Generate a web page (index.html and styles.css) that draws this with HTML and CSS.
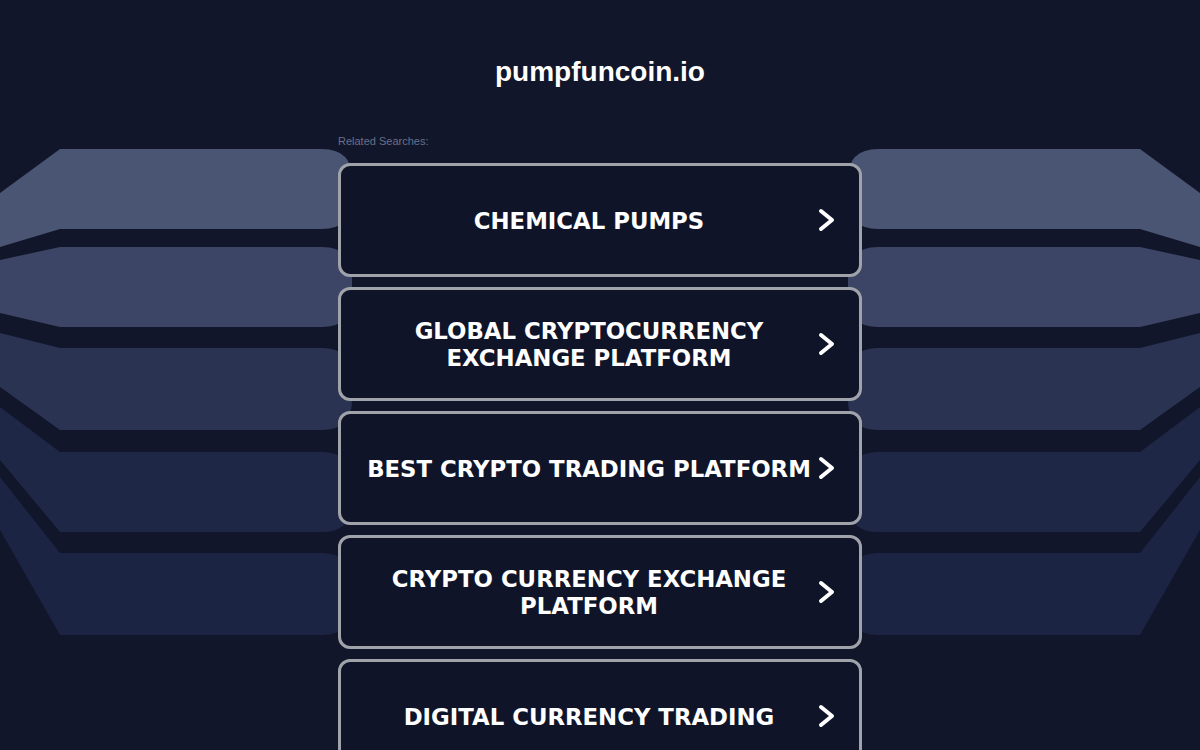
FILE: index.html
```html
<!DOCTYPE html>
<html lang="en">
<head>
    <meta charset="UTF-8">
    <meta name="viewport" content="width=device-width, initial-scale=1.0">
    <title>pumpfuncoin.io</title>
    <link rel="stylesheet" href="styles.css">
</head>
<body>
    <div class="backdrop">
        <svg width="1200" height="750" viewBox="0 0 1200 750" xmlns="http://www.w3.org/2000/svg">
            <g>
                <path fill="#4a5473" d="M0,193 L60,149 H322 Q352,149 352,179 V199 Q352,229 322,229 H60 L0,247 Z"/>
                <path fill="#3c4565" d="M0,260 L60,247 H322 Q352,247 352,277 V297 Q352,327 322,327 H60 L0,313 Z"/>
                <path fill="#2b3353" d="M0,333 L60,348 H322 Q352,348 352,378 V400 Q352,430 322,430 H60 L0,387 Z"/>
                <path fill="#1f2747" d="M0,407 L60,452 H322 Q352,452 352,482 V502 Q352,532 322,532 H60 L0,460 Z"/>
                <path fill="#1c2444" d="M0,477 L60,553 H322 Q352,553 352,583 V605 Q352,635 322,635 H60 L0,530 Z"/>
            </g>
            <g transform="translate(1200,0) scale(-1,1)">
                <path fill="#4a5473" d="M0,193 L60,149 H322 Q352,149 352,179 V199 Q352,229 322,229 H60 L0,247 Z"/>
                <path fill="#3c4565" d="M0,260 L60,247 H322 Q352,247 352,277 V297 Q352,327 322,327 H60 L0,313 Z"/>
                <path fill="#2b3353" d="M0,333 L60,348 H322 Q352,348 352,378 V400 Q352,430 322,430 H60 L0,387 Z"/>
                <path fill="#1f2747" d="M0,407 L60,452 H322 Q352,452 352,482 V502 Q352,532 322,532 H60 L0,460 Z"/>
                <path fill="#1c2444" d="M0,477 L60,553 H322 Q352,553 352,583 V605 Q352,635 322,635 H60 L0,530 Z"/>
            </g>
        </svg>
    </div>

    <div class="page">
        <h1 class="domain">pumpfuncoin.io</h1>
        <div class="related">
            <p class="related-title">Related Searches:</p>
            <a class="search-link" href="#">
                <span class="link-text">CHEMICAL PUMPS</span>
                <svg class="chevron" width="24" height="28" viewBox="0 0 24 28"><path d="M6,5 L17,14 L6,23"/></svg>
            </a>
            <a class="search-link" href="#">
                <span class="link-text">GLOBAL CRYPTOCURRENCY EXCHANGE PLATFORM</span>
                <svg class="chevron" width="24" height="28" viewBox="0 0 24 28"><path d="M6,5 L17,14 L6,23"/></svg>
            </a>
            <a class="search-link" href="#">
                <span class="link-text">BEST CRYPTO TRADING PLATFORM</span>
                <svg class="chevron" width="24" height="28" viewBox="0 0 24 28"><path d="M6,5 L17,14 L6,23"/></svg>
            </a>
            <a class="search-link" href="#">
                <span class="link-text">CRYPTO CURRENCY EXCHANGE PLATFORM</span>
                <svg class="chevron" width="24" height="28" viewBox="0 0 24 28"><path d="M6,5 L17,14 L6,23"/></svg>
            </a>
            <a class="search-link" href="#">
                <span class="link-text">DIGITAL CURRENCY TRADING</span>
                <svg class="chevron" width="24" height="28" viewBox="0 0 24 28"><path d="M6,5 L17,14 L6,23"/></svg>
            </a>
        </div>
    </div>
</body>
</html>
```

FILE: styles.css
```css
body {
    margin: 0;
    background: #11162a;
    font-family: 'Liberation Sans', Arial, sans-serif;
    color: #fff;
}
.backdrop {
    position: absolute;
    top: 0;
    left: 0;
    width: 1200px;
    height: 750px;
    z-index: 0;
}
.backdrop svg {
    display: block;
}
.page {
    position: relative;
    z-index: 1;
    width: 524px;
    margin: 0 auto;
    padding-top: 56px;
}
.domain {
    margin: 0;
    font-size: 28px;
    line-height: 32px;
    font-weight: bold;
    text-align: center;
    color: #fff;
}
.related {
    margin-top: 47px;
}
.related-title {
    margin: 0 0 15px;
    font-size: 11px;
    line-height: 13px;
    color: #6b7088;
}
.search-link {
    display: flex;
    align-items: center;
    height: 108px;
    margin-bottom: 10px;
    padding: 0 20px 0 22px;
    background: #0f1429;
    border: 3px solid #a0a3aa;
    border-radius: 12px;
    text-decoration: none;
    color: #fff;
}
.link-text {
    flex: 1;
    padding-top: 2px;
    text-align: center;
    font-family: 'DejaVu Sans', Verdana, sans-serif;
    font-weight: bold;
    font-size: 22.8px;
    line-height: 27px;
}
.chevron {
    flex: none;
}
.chevron path {
    fill: none;
    stroke: #fff;
    stroke-width: 4;
    stroke-linecap: round;
    stroke-linejoin: round;
}
```
